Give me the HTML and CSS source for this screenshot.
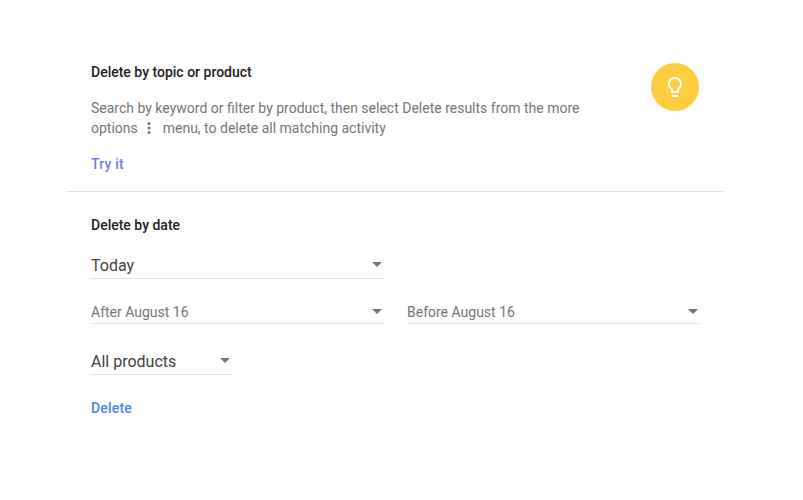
FILE: index.html
```html
<!DOCTYPE html>
<html lang="en">
<head>
<meta charset="utf-8">
<title>Delete activity</title>
<link rel="stylesheet" href="styles.css">
</head>
<body>
<main class="panel">
  <section class="topic">
    <div class="topic-text">
      <h2 class="title">Delete by topic or product</h2>
      <p class="desc">Search by keyword or filter by product, then select Delete results from the more options
        <svg class="dots" viewBox="0 0 4 14" width="4" height="14" aria-hidden="true"><circle cx="2" cy="2.5" r="1.5"/><circle cx="2" cy="7" r="1.5"/><circle cx="2" cy="11.5" r="1.5"/></svg>
        menu, to delete all matching activity</p>
      <a class="link try">Try it</a>
    </div>
    <div class="bulb">
      <svg viewBox="0 0 24 24" width="24" height="24" aria-hidden="true"><path fill="#fff" d="M9 21c0 .55.45 1 1 1h4c.55 0 1-.45 1-1v-1H9v1zm3-19C8.14 2 5 5.14 5 9c0 2.38 1.19 4.47 3 5.74V17c0 .55.45 1 1 1h6c.55 0 1-.45 1-1v-2.26c1.81-1.27 3-3.36 3-5.74 0-3.86-3.14-7-7-7zm2.85 11.1l-.85.6V16h-4v-2.3l-.85-.6C7.8 12.16 7 10.63 7 9c0-2.76 2.24-5 5-5s5 2.24 5 5c0 1.63-.8 3.16-2.15 4.1z"/></svg>
    </div>
  </section>
  <section class="date">
    <h2 class="title">Delete by date</h2>
    <div class="select large full"><span>Today</span><i class="caret"></i></div>
    <div class="range">
      <div class="select small"><span>After August 16</span><i class="caret"></i></div>
      <div class="select small"><span>Before August 16</span><i class="caret"></i></div>
    </div>
    <div class="select large products"><span>All products</span><i class="caret"></i></div>
    <a class="link del">Delete</a>
  </section>
</main>
</body>
</html>
```
FILE: styles.css
```css
* { box-sizing: border-box; }
html, body { margin: 0; background: #fff; }
body { font-family: Roboto, "Liberation Sans", sans-serif; font-size: 14px; line-height: 20px; color: #757575; height: 500px; overflow: hidden; }
.panel { width: 656px; margin-left: 67px; padding-top: 38px; }
.topic { display: flex; justify-content: space-between; align-items: flex-start; padding: 24px 24px 17px; border-bottom: 1px solid #e0e0e0; }
.topic-text { width: 500px; }
.title { margin: 0; font-size: 14px; line-height: 20px; font-weight: 500; color: #212121; }
.desc { margin: 16px 0 16px; }
.dots { fill: #757575; margin: 0 8px 0 6px; vertical-align: -2px; }
.link { display: block; font-weight: 500; line-height: 20px; letter-spacing: .2px; }
.try { color: #6f7cec; }
.del { color: #4d83f0; margin-top: 23px; }
.bulb { width: 48px; height: 48px; margin-top: 1px; border-radius: 50%; background: #ffcd40; display: flex; align-items: center; justify-content: center; }
.date { padding: 23px 24px 0; }
.select { display: flex; align-items: center; justify-content: space-between; border-bottom: 1px solid #e0e0e0; }
.large { font-size: 16px; color: #424242; height: 27px; padding-top: 2px; }
.large .caret { margin-bottom: 4px; }
.small { width: 292px; font-size: 14px; color: #757575; height: 23px; }
.full { width: 292px; margin-top: 17px; }
.range { display: flex; gap: 24px; margin-top: 22px; }
.products { width: 140px; margin-top: 24px; }
.caret { width: 0; height: 0; margin: 0 1px 2px 0; border-left: 5px solid transparent; border-right: 5px solid transparent; border-top: 5px solid #757575; }
```
